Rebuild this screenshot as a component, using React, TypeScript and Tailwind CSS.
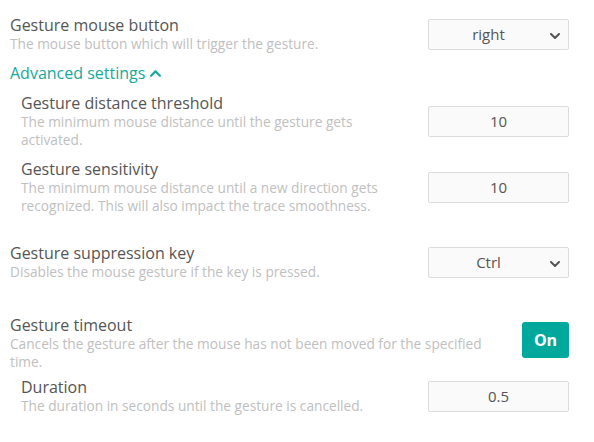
import type { ReactNode } from "react";

const font = { fontFamily: "'Open Sans', Lato, sans-serif" };

function Chevron({ up = false, className = "" }: { up?: boolean; className?: string }) {
  return (
    <svg
      viewBox="0 0 10 6"
      className={className}
      fill="none"
      stroke="currentColor"
      strokeWidth={2}
      strokeLinecap="round"
      strokeLinejoin="round"
    >
      {up ? <path d="M1 5 5 1 9 5" /> : <path d="M1 1 5 5 9 1" />}
    </svg>
  );
}

function Label({ title, desc }: { title: string; desc: ReactNode }) {
  return (
    <div className="min-w-0 flex-1">
      <div className="text-[16px] leading-[20px] text-[#555]">{title}</div>
      <div className="text-[13.7px] leading-[18px] text-[#c0c0c0]">{desc}</div>
    </div>
  );
}

function Select({ value }: { value: string }) {
  return (
    <div className="relative flex h-[31px] w-[141px] shrink-0 items-center rounded-[2px] border border-[#dcdcdc] bg-[#fafafa] pr-5 text-[15px] text-[#555]">
      <span className="flex-1 text-center">{value}</span>
      <Chevron className="absolute right-[8px] top-[13px] h-[6px] w-[10px] text-[#555]" />
    </div>
  );
}

function NumberField({ value }: { value: string }) {
  return (
    <div className="flex h-[31px] w-[141px] shrink-0 items-center justify-center rounded-[2px] border border-[#dcdcdc] bg-[#fafafa] text-[15px] text-[#555]">
      {value}
    </div>
  );
}

function Row({ children, className = "" }: { children: ReactNode; className?: string }) {
  return <div className={`flex items-center gap-6 ${className}`}>{children}</div>;
}

export default function App() {
  return (
    <div className="h-[442px] w-[594px] bg-white pl-[10px] pr-[25px] pt-[15px]" style={font}>
      <Row>
        <Label title="Gesture mouse button" desc="The mouse button which will trigger the gesture." />
        <Select value="right" />
      </Row>

      <button className="mt-[10px] flex items-center gap-[5px] text-[16px] leading-[20px] text-[#16a99c]">
        Advanced settings
        <Chevron up className="h-[7px] w-[11px]" />
      </button>

      <div className="pl-[11px]">
        <Row className="mt-[10px]">
          <Label
            title="Gesture distance threshold"
            desc={
              <>
                The minimum mouse distance until the gesture gets
                <br />
                activated.
              </>
            }
          />
          <NumberField value="10" />
        </Row>
        <Row className="mt-[10px]">
          <Label
            title="Gesture sensitivity"
            desc={
              <>
                The minimum mouse distance until a new direction gets
                <br />
                recognized. This will also impact the trace smoothness.
              </>
            }
          />
          <NumberField value="10" />
        </Row>
      </div>

      <Row className="mt-[28px]">
        <Label title="Gesture suppression key" desc="Disables the mouse gesture if the key is pressed." />
        <Select value="Ctrl" />
      </Row>

      <Row className="mt-[34px]">
        <Label
          title="Gesture timeout"
          desc={
            <>
              Cancels the gesture after the mouse has not been moved for the specified
              <br />
              time.
            </>
          }
        />
        <button className="mb-[6px] h-[36px] w-[47px] shrink-0 rounded-[3px] bg-[#00a99b] text-[16px] font-bold text-white">
          On
        </button>
      </Row>

      <div className="pl-[11px]">
        <Row className="mt-[6px]">
          <Label title="Duration" desc="The duration in seconds until the gesture is cancelled." />
          <NumberField value="0.5" />
        </Row>
      </div>
    </div>
  );
}
